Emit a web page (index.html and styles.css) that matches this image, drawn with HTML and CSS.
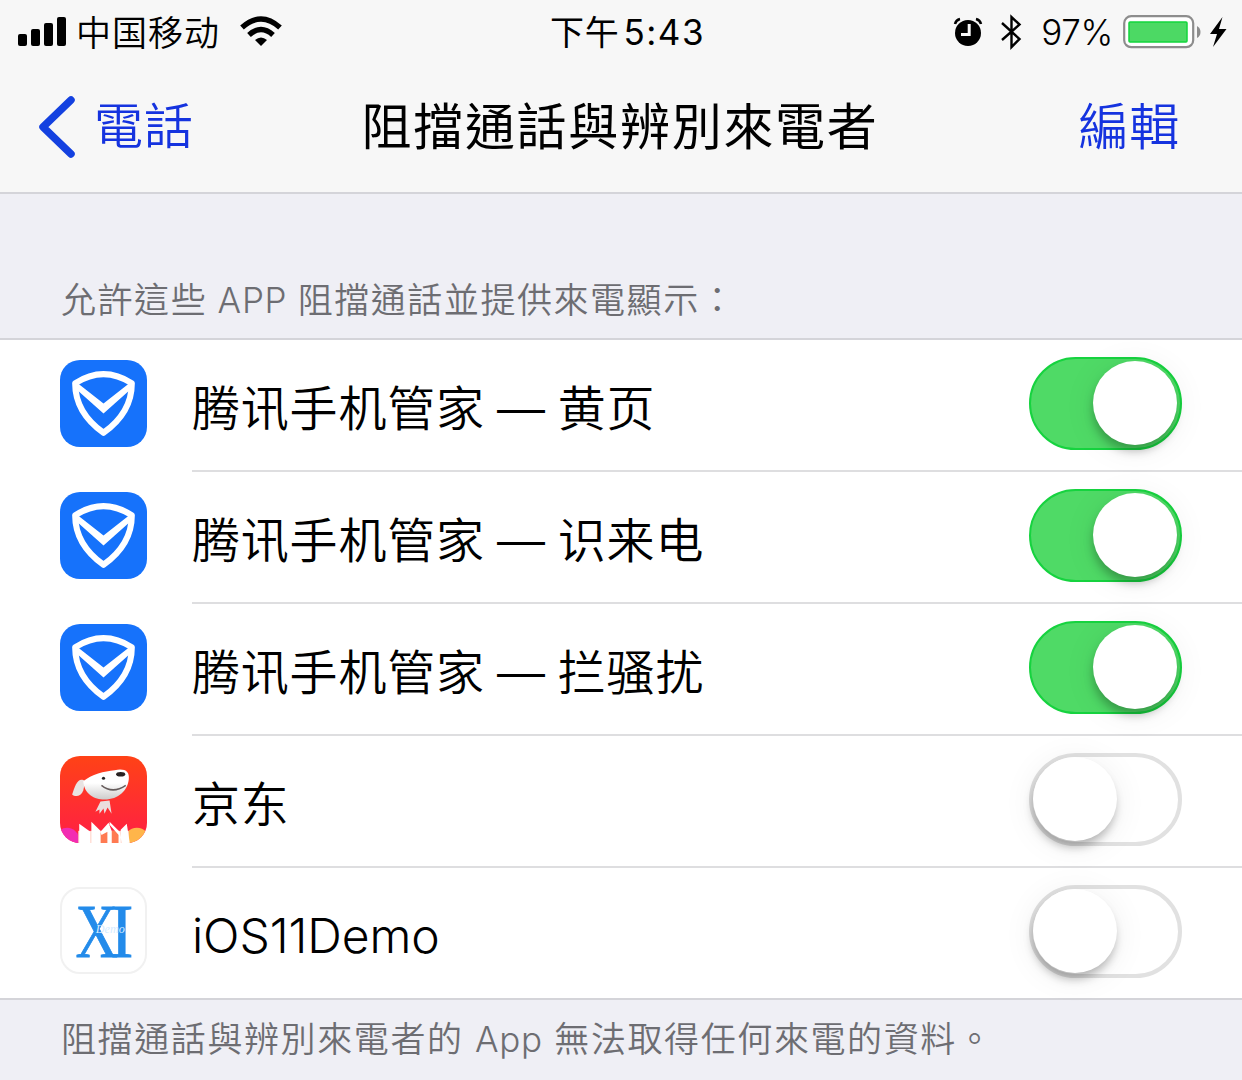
FILE: index.html
```html
<!DOCTYPE html>
<html lang="zh-Hant">
<head>
<meta charset="utf-8">
<title>阻擋通話與辨別來電者</title>
<link rel="stylesheet" href="styles.css">
</head>
<body>
<svg class="defs" width="0" height="0" aria-hidden="true">
  <symbol id="shield" viewBox="0 0 86 86">
    <path d="M15 23Q43 5 71 23Q71 52 43 72Q15 52 15 23Z" fill="none" stroke="#fff" stroke-width="6" stroke-linejoin="round"/>
    <path d="M15 21L43 43L71 21L71 28L43 53L15 28Z" fill="#fff"/>
  </symbol>
</svg>
<header class="top">
  <div class="status">
    <div class="status-left">
      <svg class="signal" width="49" height="32" viewBox="0 0 49 32"><rect x="0" y="18" width="9" height="12" rx="2"/><rect x="13" y="13" width="9" height="17" rx="2"/><rect x="26" y="7" width="9" height="23" rx="2"/><rect x="39" y="1" width="9" height="29" rx="2"/></svg>
      <span class="carrier">中国移动</span>
      <svg class="wifi" width="42" height="32" viewBox="0 0 42 32"><g fill="none" stroke="#000" stroke-width="5.4"><path d="M2 11.5Q21 -5.5 40 11.5"/><path d="M9 19Q21 8 33 19"/></g><path d="M15 24Q21 19 27 24L21 30Z"/></svg>
    </div>
    <span class="clock">下午<b>5:43</b></span>
    <div class="status-right">
      <svg class="alarm" width="30" height="32" viewBox="0 0 30 32"><circle cx="15" cy="17" r="13"/><path d="M2 8Q3 4 7 3M23 3Q27 4 28 8" fill="none" stroke="#000" stroke-width="2.5"/><path d="M16.2 8V18.5H8" fill="none" stroke="#f7f7f7" stroke-width="3"/></svg>
      <svg class="bluetooth" width="22" height="36" viewBox="0 0 22 36"><path d="M2 9L19.5 25L11.5 33V3L19.5 10.500L2 26" fill="none" stroke="#000" stroke-width="2.4"/></svg>
      <span class="percent">97%</span>
      <svg class="battery" width="78" height="34" viewBox="0 0 78 34"><rect x="1.200" y="1.200" width="69" height="31" rx="7" fill="#fff" stroke="#8d8d8d" stroke-width="2.200"/><rect x="6" y="7" width="58" height="20" rx="1" fill="#4cd964" stroke="#12d63c" stroke-width="1.500"/><path d="M74 11Q77.500 13 77.500 17T74 23Z" fill="#8d8d8d"/></svg>
      <svg class="bolt" width="18" height="32" viewBox="0 0 18 32"><path d="M13.500 1L1 18H8L4 31L17.500 13H10Z"/></svg>
    </div>
  </div>
  <nav class="nav">
    <div class="back">
      <svg width="38" height="64" viewBox="0 0 38 64"><path d="M33 5L5 32L33 59" fill="none" stroke="#1441e0" stroke-width="7.500" stroke-linecap="round" stroke-linejoin="round"/></svg>
      <span>電話</span>
    </div>
    <h1>阻擋通話與辨別來電者</h1>
    <span class="edit">編輯</span>
  </nav>
</header>
<p class="caption">允許這些 <span class="app">APP</span> 阻擋通話並提供來電顯示：</p>
<ul class="list" lang="zh-Hans">
  <li class="row"><svg class="icon blue"><use href="#shield"/></svg><div class="cell"><span class="name">腾讯手机管家 — 黄页</span><i class="switch on"></i></div></li>
  <li class="row"><svg class="icon blue"><use href="#shield"/></svg><div class="cell"><span class="name">腾讯手机管家 — 识来电</span><i class="switch on"></i></div></li>
  <li class="row"><svg class="icon blue"><use href="#shield"/></svg><div class="cell"><span class="name">腾讯手机管家 — 拦骚扰</span><i class="switch on"></i></div></li>
  <li class="row">
    <svg class="icon" viewBox="0 0 86 86">
      <defs>
        <linearGradient id="red" x2="0" y2="1"><stop offset="0" stop-color="#ff4216"/><stop offset="1" stop-color="#ff1f45"/></linearGradient>
        <linearGradient id="fur" x2="0" y2="1"><stop offset=".45" stop-color="#fff"/><stop offset="1" stop-color="#cdcccb"/></linearGradient>
      </defs>
      <rect width="86" height="86" fill="url(#red)"/>
      <circle cx="7" cy="83" r="12" fill="#f22cb2"/><circle cx="76" cy="84" r="13" fill="#ffb54a"/>
      <path d="M25 25C18 20 15 29 12 38C15 41 21 40 23 34Z" fill="#e9e3e2"/>
      <path d="M23 25C31 18 44 15 54 14C64 12 69 15 68 23C67 34 58 43 44 43C34 43 24 38 23 25Z" fill="url(#fur)"/>
      <path d="M41 29Q52 38 65 29" fill="none" stroke="#665c5c" stroke-width="1.500"/><ellipse cx="60" cy="18" rx="4.500" ry="2.300" fill="#292222"/><circle cx="43" cy="22" r="1.600" fill="#222"/>
      <path d="M40 45L35 55L39 53L39 57L43 52L44 57L47 51L51 57L49 44Z" fill="#eadddd"/>
      <rect x="18" y="74" width="50" height="12" fill="#ffd0c4"/>
      <path d="M40 74H47V86H40ZM51 74H58V86H51Z" fill="#ff7a52"/>
      <path d="M19 67L30 75V86H19ZM31 65L40 74V86H31ZM40 75L48 66L51 74V86H47V75L41 78ZM59 75L49 65V68L58 78V86H61ZM60 73L66 67L69 86H60Z" fill="#fff"/>
    </svg>
    <div class="cell"><span class="name">京东</span><i class="switch"></i></div></li>
  <li class="row">
    <svg class="icon plain" viewBox="0 0 86 86"><text class="xi" x="14" y="70" textLength="44" lengthAdjust="spacingAndGlyphs">X</text><text class="xi" x="50" y="70" textLength="24" lengthAdjust="spacingAndGlyphs">I</text><text class="demo" x="35" y="46" textLength="30" lengthAdjust="spacingAndGlyphs">Demo</text></svg>
    <div class="cell"><span class="name latin">iOS11Demo</span><i class="switch"></i></div></li>
</ul>
<p class="footer">阻擋通話與辨別來電者的 <span class="app">App</span> 無法取得任何來電的資料。</p>
</body>
</html>
```
FILE: styles.css
```css
* { box-sizing: border-box; }
body {
  margin: 0;
  height: 1080px;
  overflow: hidden;
  background: #efeff5;
  color: #000;
  font-family: Inter, "Noto Sans CJK TC", sans-serif;
  font-weight: 350;
}
[lang="zh-Hans"], .carrier { font-family: Inter, "Noto Sans CJK SC", sans-serif; }
span, h1, p { white-space: nowrap; }
svg { flex: none; }
.defs { display: block; height: 0; }
.top { height: 194px; background: #f7f7f7; border-bottom: 2px solid #d4d4d9; }
.status {
  height: 62px;
  padding: 0 15px 0 18px;
  display: grid;
  grid-template-columns: 1fr auto 1fr;
  align-items: center;
}
.status-left, .status-right { display: flex; align-items: center; }
.status-right { justify-content: flex-end; }
.carrier { margin-left: 9px; padding-top: 2px; font-size: 35px; letter-spacing: 1px; line-height: 60px; }
.wifi { margin-left: 20px; }
.clock { padding: 2px 0 0 10px; font-size: 34px; letter-spacing: .8px; font-weight: 400; line-height: 60px; }
.clock b { margin-left: 4px; font-size: 35px; font-weight: 400; letter-spacing: 1.5px; }
.alarm { margin-right: 1px; }
.bluetooth { margin-left: 16px; }
.percent { margin-left: 19px; font-size: 35px; line-height: 62px; letter-spacing: -.3px; }
.battery { margin-left: 10px; }
.bolt { margin-left: 8px; }
.nav {
  height: 130px;
  padding: 0 62px 0 38px;
  display: grid;
  grid-template-columns: 1fr auto 1fr;
  align-items: center;
}
.back { display: flex; align-items: center; gap: 18px; }
.back, .edit { color: #1533df; font-size: 49px; line-height: 130px; letter-spacing: 1px; }
.edit { text-align: right; font-size: 50px; letter-spacing: .8px; }
.nav h1 { margin: 0; padding: 0 0 0 22px; font-size: 50px; font-weight: 400; letter-spacing: 1.7px; line-height: 130px; }
.caption, .footer { margin: 0; padding-left: 61px; color: #6d6d72; font-size: 35px; letter-spacing: 1.55px; word-spacing: -1px; }
.app { letter-spacing: .7px; }
.caption { height: 144px; padding-top: 76px; line-height: 60px; }
.footer { padding-top: 9px; line-height: 60px; letter-spacing: 1.6px; word-spacing: 0; }
.list { margin: 0; padding: 0; list-style: none; background: #fff; border-top: 2px solid #d4d4d9; }
.row { height: 132px; padding-left: 60px; display: flex; align-items: center; }
.icon { width: 87px; height: 87px; margin-bottom: 5px; border-radius: 20px; }
.blue { background: #1672fb; }
.plain { border: 2px solid #f1f1f1; }
.xi { font: 78px "Liberation Serif", serif; fill: #238bea; stroke: #238bea; stroke-width: .8px; }
.demo { font: italic 13px "Liberation Serif", serif; fill: #d5ecff; }
.cell {
  flex: 1;
  height: 132px;
  margin-left: 45px;
  padding-right: 60px;
  display: flex;
  align-items: center;
  justify-content: space-between;
  border-bottom: 2px solid #dedee0;
}
.row:last-child { border-bottom: 2px solid #d4d4d9; }
.row:last-child .cell { border-bottom: 0; height: 130px; }
.name { padding-top: 8px; font-size: 48px; letter-spacing: .8px; line-height: 120px; word-spacing: -2.2px; }
.latin { letter-spacing: -.1px; padding-top: 5px; }
.switch {
  display: flex;
  width: 153px;
  height: 93px;
  margin-bottom: 3px;
  padding: 0;
  border: 4px solid #e1e1e1;
  border-radius: 47px;
}
.switch::after {
  content: "";
  width: 84px;
  height: 84px;
  border-radius: 50%;
  background: #fff;
  box-shadow: -1px 7px 10px -1px #0004, 0 4px 34px #00000012;
}
.on { justify-content: flex-end; padding: 2px 3px; border: 2px solid #16d33f; background: #4fda66; }
```
